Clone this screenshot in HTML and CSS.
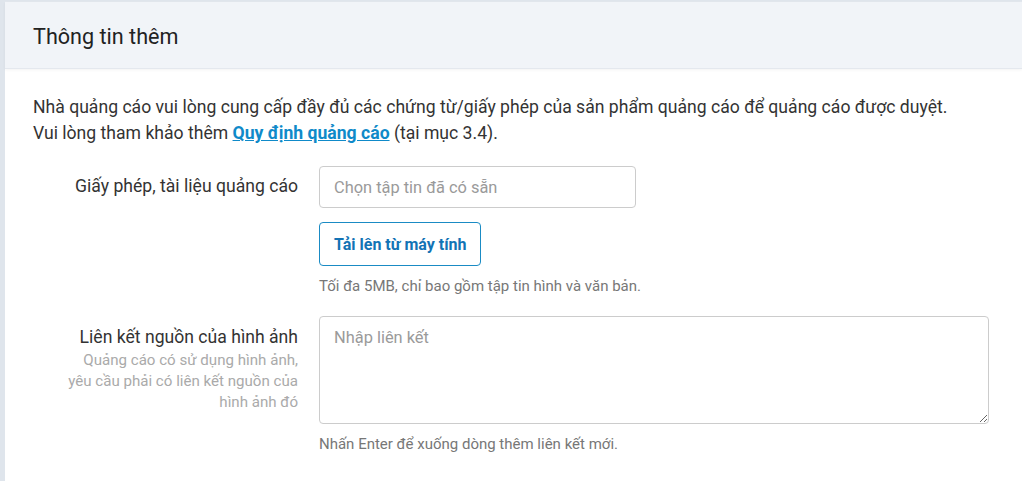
FILE: index.html
```html
<!DOCTYPE html>
<html lang="vi">
<head>
<meta charset="utf-8">
<link rel="stylesheet" href="styles.css">
</head>
<body>
<div class="page">
  <section class="card">
    <header class="card-head">
      <h2 class="card-title">Thông tin thêm</h2>
    </header>
    <div class="card-body">
      <p class="intro">Nhà quảng cáo vui lòng cung cấp đầy đủ các chứng từ/giấy phép của sản phẩm quảng cáo để quảng cáo được duyệt.<br>Vui lòng tham khảo thêm <a class="link" href="#">Quy định quảng cáo</a> (tại mục 3.4).</p>

      <div class="form-row row-files">
        <div class="label-col">
          <div class="label">Giấy phép, tài liệu quảng cáo</div>
        </div>
        <div class="field-col">
          <div class="input">Chọn tập tin đã có sẵn</div>
          <button class="btn-upload" type="button">Tải lên từ máy tính</button>
          <div class="help">Tối đa 5MB, chỉ bao gồm tập tin hình và văn bản.</div>
        </div>
      </div>

      <div class="form-row row-links">
        <div class="label-col">
          <div class="label">Liên kết nguồn của hình ảnh</div>
          <div class="sublabel">Quảng cáo có sử dụng hình ảnh,<br>yêu cầu phải có liên kết nguồn của<br>hình ảnh đó</div>
        </div>
        <div class="field-col">
          <textarea class="textarea" placeholder="Nhập liên kết"></textarea>
          <div class="help">Nhấn Enter để xuống dòng thêm liên kết mới.</div>
        </div>
      </div>
    </div>
  </section>
</div>
</body>
</html>
```

FILE: styles.css
```css
* { box-sizing: border-box; }
html, body { margin: 0; padding: 0; }
body {
  background: #dfe5ec;
  font-family: Roboto, "Noto Sans", Arial, sans-serif;
  color: #333;
}
.page {
  padding-left: 5px;
  padding-top: 1px;
}
.card {
  background: #fff;
  border-top: 1px solid #e3e8ee;
  min-height: 480px;
}
.card-head {
  background: #f1f4f8;
  height: 67px;
  display: flex;
  align-items: center;
  padding-left: 28px;
  border-bottom: 1px solid #e4e8ee;
  box-shadow: 0 1px 3px rgba(0,0,0,0.05);
}
.card-title {
  margin: 0;
  font-size: 21.6px;
  font-weight: 400;
  color: #222;
  padding-top: 3px;
}
.card-body {
  padding: 25px 28px 0 28px;
}
.intro {
  margin: 0 0 20px 0;
  font-size: 17.6px;
  line-height: 26px;
  color: #333;
}
.link {
  color: #0f8ac9;
  font-weight: 700;
  text-decoration: underline;
}
.form-row {
  display: grid;
  grid-template-columns: 265px 670px;
  column-gap: 21px;
}
.label-col {
  text-align: right;
}
.label {
  font-size: 17.6px;
  color: #333;
  line-height: 22px;
}
.row-files .label { padding-top: 9px; }
.row-links .label { padding-top: 10px; }
.sublabel {
  font-size: 15.1px;
  color: #aaa;
  line-height: 21px;
  margin-top: 2px;
}
.field-col {
  display: flex;
  flex-direction: column;
  align-items: flex-start;
}
.input {
  width: 317px;
  height: 42px;
  border: 1px solid #ccc;
  border-radius: 4px;
  padding: 0 14px;
  display: flex;
  align-items: center;
  font-size: 16.4px;
  color: #9a9a9a;
}
.btn-upload {
  margin-top: 14px;
  height: 44px;
  padding: 0 14px;
  border: 1px solid #1a8bc4;
  border-radius: 4px;
  background: #fff;
  color: #1273b5;
  font-family: Roboto, "Noto Sans", Arial, sans-serif;
  font-size: 16px;
  font-weight: 700;
}
.help {
  margin-top: 10px;
  font-size: 15px;
  color: #777;
  line-height: 20px;
}
.row-files { margin-bottom: 20px; }
.textarea {
  width: 670px;
  height: 108px;
  border: 1px solid #ccc;
  border-radius: 4px;
  padding: 11px 14px;
  font-family: Roboto, "Noto Sans", Arial, sans-serif;
  font-size: 16.4px;
  color: #333;
  resize: vertical;
  display: block;
}
.textarea::placeholder { color: #9a9a9a; }
.row-links .help { margin-top: 10px; }
```
